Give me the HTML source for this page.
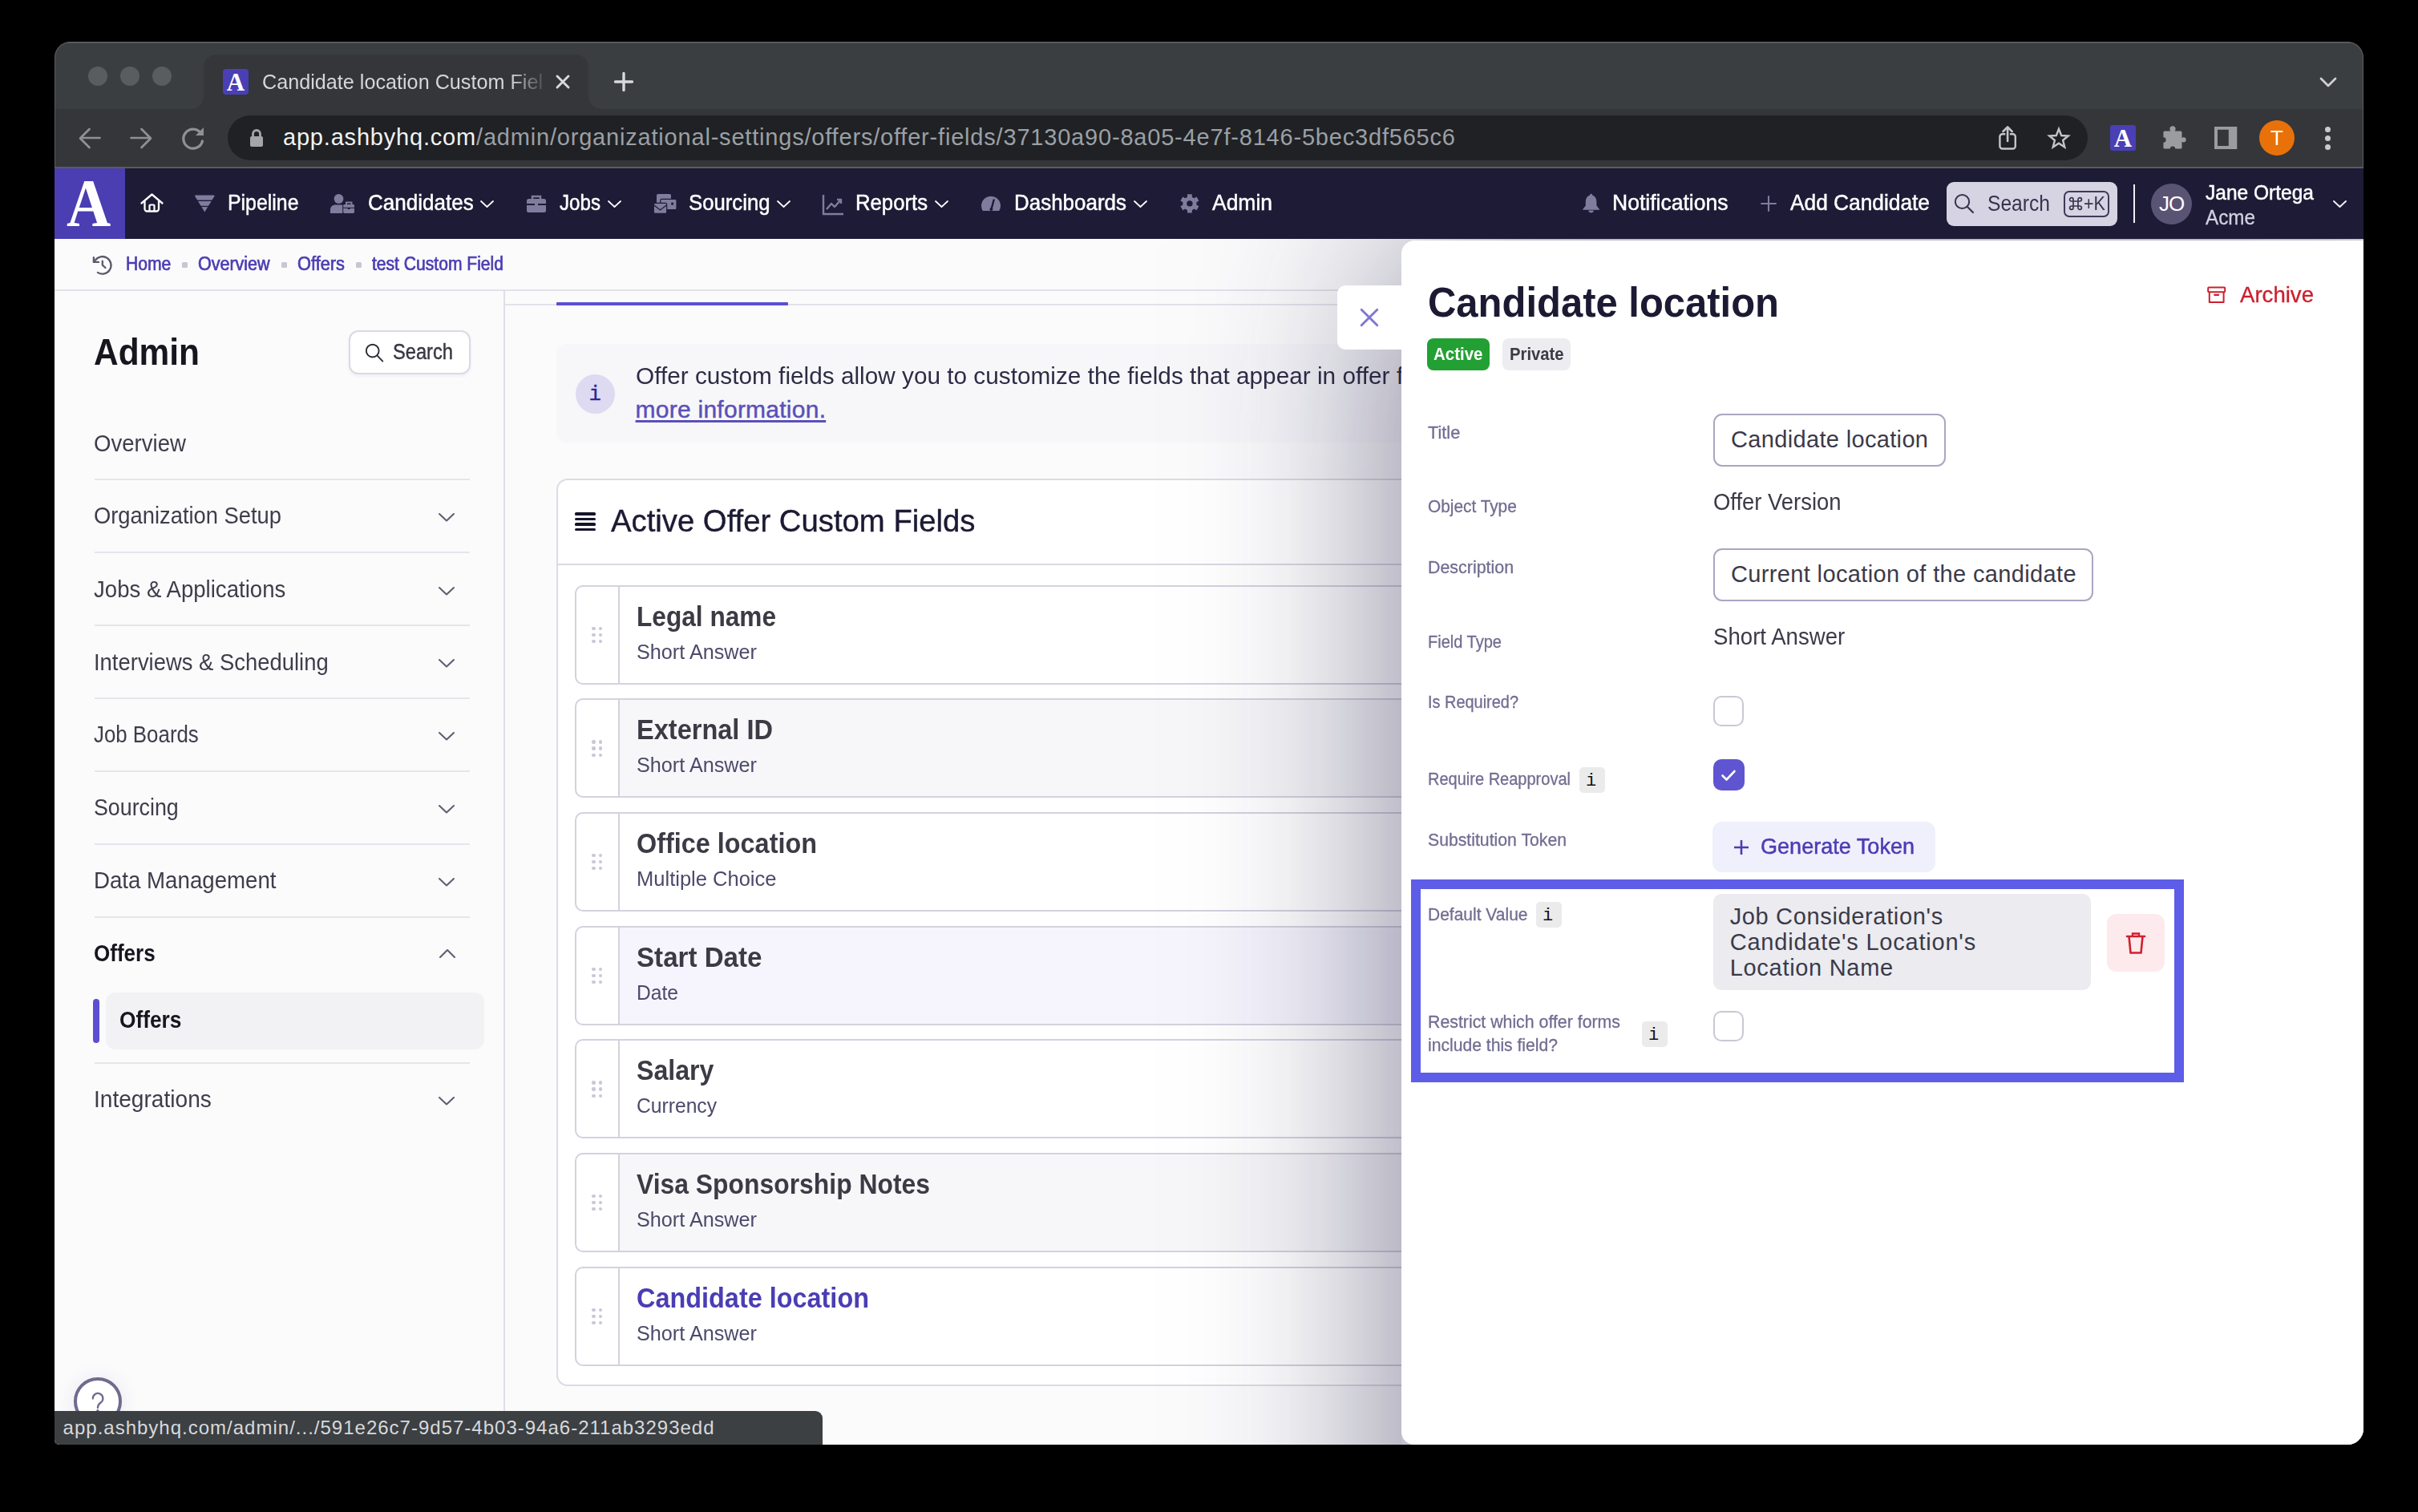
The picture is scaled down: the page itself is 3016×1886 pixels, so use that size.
<!DOCTYPE html><html><head><meta charset="utf-8"><style>
html,body{margin:0;padding:0;background:#000;width:3016px;height:1886px;overflow:hidden;font-family:'Liberation Sans',sans-serif}
</style></head><body><div style="position:absolute;left:68px;top:52px;width:2880px;height:1750px;border-radius:20px 20px 20px 6px;overflow:hidden;background:#3c3f42"><div style="position:absolute;left:-68px;top:-52px;width:3016px;height:1886px">
<div style="position:absolute;left:68px;top:52px;width:2880px;height:84px;background:#3b3e41;"></div>
<div style="position:absolute;left:68px;top:52px;width:2880px;height:2px;background:#55585b;"></div>
<div style="position:absolute;left:110px;top:83px;width:24px;height:24px;border-radius:50%;background:#5a5d60"></div>
<div style="position:absolute;left:150px;top:83px;width:24px;height:24px;border-radius:50%;background:#5a5d60"></div>
<div style="position:absolute;left:190px;top:83px;width:24px;height:24px;border-radius:50%;background:#5a5d60"></div>
<svg style="position:absolute;left:230px;top:60px;" width="530" height="76" viewBox="0 0 530 76"><path d="M 8 76 A 16 16 0 0 0 24 60 L 24 24 A 16 16 0 0 1 40 8 L 488 8 A 16 16 0 0 1 504 24 L 504 60 A 16 16 0 0 0 520 76 Z" fill="#35363a"/></svg>
<div style="position:absolute;left:278px;top:86px;width:32px;height:32px;border-radius:4px;background:#4a3fb5;overflow:hidden"><div style="position:absolute;left:0;top:1px;width:32px;text-align:center;font:700 31px/32px 'Liberation Serif',serif;color:#fff">A</div></div>
<div class="t" style="position:absolute;left:327.0px;top:88.9px;font:400 26px/26px 'Liberation Sans', sans-serif;color:#d5d6d9;white-space:pre;letter-spacing:0.000px;transform:scaleX(0.9687);transform-origin:0 0;-webkit-mask-image:linear-gradient(90deg,#000 0,#000 318px,rgba(0,0,0,0.35) 350px,transparent 374px);">Candidate location Custom Fiel</div>
<svg style="position:absolute;left:692px;top:92px;" width="20" height="20" viewBox="0 0 20 20"><path d="M3 3 L17 17 M17 3 L3 17" stroke="#d8d9db" stroke-width="2.9" stroke-linecap="round"/></svg>
<svg style="position:absolute;left:764px;top:88px;" width="28" height="28" viewBox="0 0 28 28"><path d="M14 3.5 V24.5 M3.5 14 H24.5" stroke="#d8d9db" stroke-width="3.4" stroke-linecap="round"/></svg>
<svg style="position:absolute;left:2892px;top:92px;" width="24" height="20" viewBox="0 0 24 20"><path d="M3 6 L12 15 L21 6" stroke="#cfd0d2" stroke-width="2.8" fill="none" stroke-linecap="round" stroke-linejoin="round"/></svg>
<div style="position:absolute;left:68px;top:136px;width:2880px;height:72px;background:#35363a;"></div>
<div style="position:absolute;left:68px;top:208px;width:2880px;height:2px;background:#5b5c60;"></div>
<svg style="position:absolute;left:96px;top:156px;" width="32" height="32" viewBox="0 0 32 32"><path d="M28.5 16 H4.5 M15.5 5 L4 16.5 L15.5 28" stroke="#8f9195" stroke-width="2.7" fill="none" stroke-linecap="round" stroke-linejoin="round"/></svg>
<svg style="position:absolute;left:160px;top:156px;" width="32" height="32" viewBox="0 0 32 32"><path d="M3.5 16 H27.5 M16.5 5 L28 16.5 L16.5 28" stroke="#8f9195" stroke-width="2.7" fill="none" stroke-linecap="round" stroke-linejoin="round"/></svg>
<svg style="position:absolute;left:224px;top:156px;" width="34" height="34" viewBox="0 0 34 34"><path d="M26.5 10 A 12 12 0 1 0 28.5 20" stroke="#8f9195" stroke-width="3.2" fill="none" stroke-linecap="round"/><path d="M30 3 L30 13 L20 13 Z" fill="#8f9195"/></svg>
<div style="position:absolute;left:284px;top:144px;width:2320px;height:56px;background:#202124;border-radius:28px;"></div>
<svg style="position:absolute;left:310px;top:160px;" width="20" height="25" viewBox="0 0 20 25"><path d="M5.5 10 V7 A4.5 4.5 0 0 1 14.5 7 V10" stroke="#a2a6aa" stroke-width="2.8" fill="none"/><rect x="2" y="10" width="16" height="13" rx="2" fill="#a2a6aa"/></svg>
<div class="t" style="position:absolute;left:353.0px;top:156.7px;font:400 29px/29px 'Liberation Sans', sans-serif;color:#f1f3f4;white-space:pre;letter-spacing:0.806px;">app.ashbyhq.com<span style="color:#9aa0a6">/admin/organizational-settings/offers/offer-fields/37130a90-8a05-4e7f-8146-5bec3df565c6</span></div>
<svg style="position:absolute;left:2488px;top:154px;" width="32" height="36" viewBox="0 0 32 36"><path d="M13.3 13.2 H9.6 A3.2 3.2 0 0 0 6.4 16.4 V28.3 A3.2 3.2 0 0 0 9.6 31.5 H22.6 A3.2 3.2 0 0 0 25.8 28.3 V16.4 A3.2 3.2 0 0 0 22.6 13.2 H18.9" stroke="#c4c5c7" stroke-width="2.4" fill="none"/><path d="M16.1 22 V5 M10.5 10 L16.1 4.4 L21.7 10" stroke="#c4c5c7" stroke-width="2.6" fill="none" stroke-linecap="round" stroke-linejoin="round"/></svg>
<svg style="position:absolute;left:2550px;top:154px;" width="36" height="36" viewBox="0 0 36 36"><path d="M18 4.5 L21.6 13.8 L31.4 14.3 L23.8 20.6 L26.3 30.3 L18 24.9 L9.7 30.3 L12.2 20.6 L4.6 14.3 L14.4 13.8 Z" transform="translate(18,18) scale(0.88) translate(-18,-17.2)" stroke="#c4c5c7" stroke-width="2.7" fill="none" stroke-linejoin="miter"/></svg>
<div style="position:absolute;left:2632px;top:156px;width:32px;height:32px;border-radius:3px;background:#4a3fb5;overflow:hidden"><div style="position:absolute;left:0;top:1px;width:32px;text-align:center;font:700 31px/32px 'Liberation Serif',serif;color:#fff">A</div></div>
<svg style="position:absolute;left:2696px;top:154px;" width="34" height="36" viewBox="0 0 34 36"><rect x="2.4" y="9.5" width="23.1" height="21.9" rx="1.5" fill="#9a9c9f"/><circle cx="14" cy="6.8" r="3.6" fill="#9a9c9f"/><circle cx="27.6" cy="20.3" r="3.1" fill="#9a9c9f"/><circle cx="2.4" cy="20.5" r="3.2" fill="#35363a"/><circle cx="14" cy="31.6" r="3.2" fill="#35363a"/></svg>
<svg style="position:absolute;left:2758px;top:154px;" width="36" height="36" viewBox="0 0 36 36"><path d="M4 4 H32.3 V32 H4 Z M8 7.8 V28 H21.8 V7.8 Z" fill="#9a9c9f" fill-rule="evenodd"/></svg>
<div style="position:absolute;left:2818px;top:150px;width:44px;height:44px;border-radius:50%;background:#e8710a;color:#fff;font:400 26px/44px 'Liberation Sans';text-align:center">T</div>
<div style="position:absolute;left:2900px;top:157.5px;width:7px;height:7px;border-radius:50%;background:#c8cacc"></div>
<div style="position:absolute;left:2900px;top:168.5px;width:7px;height:7px;border-radius:50%;background:#c8cacc"></div>
<div style="position:absolute;left:2900px;top:179.5px;width:7px;height:7px;border-radius:50%;background:#c8cacc"></div>
<div style="position:absolute;left:68px;top:52px;width:2878px;height:160px;border:1px solid #5a5d60;border-bottom:none;border-radius:20px 20px 0 0;"></div>
<div style="position:absolute;left:68px;top:210px;width:2880px;height:88px;background:#1e1b36;"></div>
<div style="position:absolute;left:68px;top:210px;width:88px;height:88px;background:#4b3db2;"></div>
<div class="t" style="position:absolute;left:83.0px;top:211.8px;font:700 84px/84px 'Liberation Serif', serif;color:#ffffff;white-space:pre;letter-spacing:0.000px;transform:scaleX(0.91);transform-origin:0 0;">A</div>
<svg style="position:absolute;left:172px;top:238px;" width="36" height="32" viewBox="0 0 36 32"><path d="M4.5 15.5 L17.5 4.5 L30.5 15.5" stroke="#ffffff" stroke-width="2.3" fill="none" stroke-linejoin="round" stroke-linecap="round"/><path d="M8.5 13 V22.5 A3 3 0 0 0 11.5 25.5 H23 A3 3 0 0 0 26 22.5 V13" stroke="#ffffff" stroke-width="2.3" fill="none"/><path d="M14.5 25.5 V18.5 Q14.5 17.5 15.5 17.5 H19.5 Q20.5 17.5 20.5 18.5 V25.5" stroke="#ffffff" stroke-width="2.2" fill="none"/></svg>
<svg style="position:absolute;left:240px;top:240px;" width="30" height="28" viewBox="0 0 30 28"><path d="M4 3.6 H26.6 Q28 3.6 27.3 5 L15.3 24.5 L3.3 5 Q2.6 3.6 4 3.6 Z" fill="#807c9e"/><rect x="0" y="9.6" width="30" height="1.4" fill="#1e1b36"/><rect x="0" y="16.8" width="30" height="1.3" fill="#1e1b36"/></svg>
<div class="t" style="position:absolute;left:283.5px;top:239.2px;font:400 28px/28px 'Liberation Sans', sans-serif;color:#ffffff;white-space:pre;letter-spacing:0.000px;transform:scaleX(0.8882);transform-origin:0 0;-webkit-text-stroke:0.5px #fff;">Pipeline</div>
<svg style="position:absolute;left:410px;top:240px;" width="34" height="30" viewBox="0 0 34 30"><circle cx="12.5" cy="8" r="5.9" fill="#807c9e"/><path d="M2 26 V21.5 C2 17.8 4.8 15.6 8.5 15.6 H17.2 V26 Z" fill="#807c9e"/><path d="M22 15 V12.5 H28.5 V15" stroke="#807c9e" stroke-width="2" fill="none"/><rect x="18.2" y="15" width="13.8" height="11" rx="1.4" fill="#807c9e"/><rect x="18" y="18.8" width="14.2" height="1" fill="#1e1b36"/><rect x="23.8" y="19" width="2.8" height="2" fill="#1e1b36"/></svg>
<div class="t" style="position:absolute;left:459.0px;top:239.2px;font:400 28px/28px 'Liberation Sans', sans-serif;color:#ffffff;white-space:pre;letter-spacing:0.000px;transform:scaleX(0.9297);transform-origin:0 0;-webkit-text-stroke:0.5px #fff;">Candidates</div>
<svg style="position:absolute;left:598px;top:248.2px;" width="19" height="14.0" viewBox="0 0 19 14.0"><path d="M2 3 L9.5 10.0 L17 3" stroke="#ffffff" stroke-width="1.8" fill="none" stroke-linecap="round" stroke-linejoin="round"/></svg>
<svg style="position:absolute;left:655px;top:240px;" width="28" height="28" viewBox="0 0 28 28"><rect x="2" y="8" width="24" height="17" rx="2.5" fill="#807c9e"/><path d="M9 8 V5 H19 V8" stroke="#807c9e" stroke-width="2.5" fill="none"/><rect x="2" y="14" width="24" height="2" fill="#1e1b36"/><rect x="12" y="12.5" width="4" height="5" fill="#807c9e"/></svg>
<div class="t" style="position:absolute;left:698.0px;top:239.2px;font:400 28px/28px 'Liberation Sans', sans-serif;color:#ffffff;white-space:pre;letter-spacing:0.000px;transform:scaleX(0.8621);transform-origin:0 0;-webkit-text-stroke:0.5px #fff;">Jobs</div>
<svg style="position:absolute;left:757px;top:248.2px;" width="19" height="14.0" viewBox="0 0 19 14.0"><path d="M2 3 L9.5 10.0 L17 3" stroke="#ffffff" stroke-width="1.8" fill="none" stroke-linecap="round" stroke-linejoin="round"/></svg>
<svg style="position:absolute;left:812px;top:240px;" width="34" height="30" viewBox="0 0 34 30"><rect x="7" y="2" width="18" height="12" rx="1.8" fill="#807c9e"/><rect x="11.8" y="8.3" width="20.2" height="13.4" rx="1.8" fill="#807c9e" stroke="#1e1b36" stroke-width="1.2"/><rect x="25.2" y="12.7" width="2.8" height="2.9" fill="#1e1b36"/><rect x="3.3" y="13.3" width="16.4" height="13" rx="1.8" fill="#807c9e" stroke="#1e1b36" stroke-width="1.2"/><path d="M3.8 16 L11.5 22 L19.2 16" stroke="#1e1b36" stroke-width="1.3" fill="none"/></svg>
<div class="t" style="position:absolute;left:859.0px;top:239.2px;font:400 28px/28px 'Liberation Sans', sans-serif;color:#ffffff;white-space:pre;letter-spacing:0.000px;transform:scaleX(0.9184);transform-origin:0 0;-webkit-text-stroke:0.5px #fff;">Sourcing</div>
<svg style="position:absolute;left:968px;top:248.2px;" width="19" height="14.0" viewBox="0 0 19 14.0"><path d="M2 3 L9.5 10.0 L17 3" stroke="#ffffff" stroke-width="1.8" fill="none" stroke-linecap="round" stroke-linejoin="round"/></svg>
<svg style="position:absolute;left:1024px;top:240px;" width="30" height="30" viewBox="0 0 30 30"><path d="M3 3 V27 H28" stroke="#807c9e" stroke-width="2.4" fill="none"/><path d="M7 21 L13 14 L17 18 L25 9 M20 9 H25 V14" stroke="#807c9e" stroke-width="2.4" fill="none" stroke-linejoin="round"/></svg>
<div class="t" style="position:absolute;left:1067.0px;top:239.2px;font:400 28px/28px 'Liberation Sans', sans-serif;color:#ffffff;white-space:pre;letter-spacing:0.000px;transform:scaleX(0.9179);transform-origin:0 0;-webkit-text-stroke:0.5px #fff;">Reports</div>
<svg style="position:absolute;left:1165px;top:248.2px;" width="19" height="14.0" viewBox="0 0 19 14.0"><path d="M2 3 L9.5 10.0 L17 3" stroke="#ffffff" stroke-width="1.8" fill="none" stroke-linecap="round" stroke-linejoin="round"/></svg>
<svg style="position:absolute;left:1222px;top:242px;" width="28" height="24" viewBox="0 0 28 24"><path d="M3.8 21 A12 12 0 1 1 24.2 21 Z" fill="#807c9e"/><path d="M14.6 18.6 L17.6 7.5" stroke="#1e1b36" stroke-width="2.4" stroke-linecap="round"/><circle cx="14.4" cy="19" r="2" fill="#1e1b36"/></svg>
<div class="t" style="position:absolute;left:1265.0px;top:239.2px;font:400 28px/28px 'Liberation Sans', sans-serif;color:#ffffff;white-space:pre;letter-spacing:0.000px;transform:scaleX(0.9272);transform-origin:0 0;-webkit-text-stroke:0.5px #fff;">Dashboards</div>
<svg style="position:absolute;left:1413px;top:248.2px;" width="19" height="14.0" viewBox="0 0 19 14.0"><path d="M2 3 L9.5 10.0 L17 3" stroke="#ffffff" stroke-width="1.8" fill="none" stroke-linecap="round" stroke-linejoin="round"/></svg>
<svg style="position:absolute;left:1470px;top:240px;" width="28" height="28" viewBox="0 0 28 28"><g transform="translate(13.9,13.9)" fill="#807c9e"><circle r="8.6"/><rect x="-2.9" y="-11.6" width="5.8" height="5" transform="rotate(0)"/><rect x="-2.9" y="-11.6" width="5.8" height="5" transform="rotate(60)"/><rect x="-2.9" y="-11.6" width="5.8" height="5" transform="rotate(120)"/><rect x="-2.9" y="-11.6" width="5.8" height="5" transform="rotate(180)"/><rect x="-2.9" y="-11.6" width="5.8" height="5" transform="rotate(240)"/><rect x="-2.9" y="-11.6" width="5.8" height="5" transform="rotate(300)"/></g><circle cx="13.9" cy="13.9" r="3.7" fill="#1e1b36"/></svg>
<div class="t" style="position:absolute;left:1512.0px;top:239.2px;font:400 28px/28px 'Liberation Sans', sans-serif;color:#ffffff;white-space:pre;letter-spacing:0.000px;transform:scaleX(0.9449);transform-origin:0 0;-webkit-text-stroke:0.5px #fff;">Admin</div>
<svg style="position:absolute;left:1970px;top:240px;" width="30" height="30" viewBox="0 0 30 30"><path d="M14.6 3.6 C9.6 3.6 7.8 7.8 7.8 12.2 V16.6 L4.3 21 Q3.9 21.8 4.8 21.8 H24.4 Q25.3 21.8 24.9 21 L21.4 16.6 V12.2 C21.4 7.8 19.6 3.6 14.6 3.6 Z" fill="#807c9e"/><circle cx="14.6" cy="3.4" r="1.7" fill="#807c9e"/><path d="M11.4 22.4 A3.2 2.8 0 0 0 17.8 22.4 Z" fill="#807c9e"/></svg>
<div class="t" style="position:absolute;left:2010.5px;top:239.2px;font:400 28px/28px 'Liberation Sans', sans-serif;color:#ffffff;white-space:pre;letter-spacing:0.000px;transform:scaleX(0.9474);transform-origin:0 0;-webkit-text-stroke:0.5px #fff;">Notifications</div>
<svg style="position:absolute;left:2194px;top:242px;" width="24" height="24" viewBox="0 0 24 24"><path d="M12 2.3 V21.7 M2.3 12 H21.7" stroke="#807c9e" stroke-width="2.1"/></svg>
<div class="t" style="position:absolute;left:2233.0px;top:239.2px;font:400 28px/28px 'Liberation Sans', sans-serif;color:#ffffff;white-space:pre;letter-spacing:0.000px;transform:scaleX(0.9392);transform-origin:0 0;-webkit-text-stroke:0.5px #fff;">Add Candidate</div>
<div style="position:absolute;left:2428px;top:227px;width:213px;height:55px;background:#d6d3e2;border-radius:9px;"></div>
<svg style="position:absolute;left:2436px;top:240px;" width="30" height="30" viewBox="0 0 30 30"><circle cx="11.5" cy="11.5" r="8.6" stroke="#37344f" stroke-width="2" fill="none"/><path d="M18 18 L25 25" stroke="#37344f" stroke-width="2.2" stroke-linecap="round"/></svg>
<div class="t" style="position:absolute;left:2478.7px;top:239.7px;font:400 28px/28px 'Liberation Sans', sans-serif;color:#37344f;white-space:pre;letter-spacing:0.000px;transform:scaleX(0.8792);transform-origin:0 0;">Search</div>
<div style="position:absolute;left:2574px;top:238px;width:53px;height:29px;border:2px solid #3d3a5a;border-radius:7px"></div>
<svg style="position:absolute;left:2580px;top:245px;" width="18" height="18" viewBox="0 0 18 18"><path d="M6 6 V3.8 A2.2 2.2 0 1 0 3.8 6 H14.2 A2.2 2.2 0 1 0 12 3.8 V14.2 A2.2 2.2 0 1 0 14.2 12 H3.8 A2.2 2.2 0 1 0 6 14.2 Z" stroke="#37344f" stroke-width="1.7" fill="none" stroke-linejoin="round"/></svg>
<div class="t" style="position:absolute;left:2598.5px;top:242.9px;font:400 23px/23px 'Liberation Sans', sans-serif;color:#37344f;white-space:pre;letter-spacing:0.000px;transform:scaleX(0.9381);transform-origin:0 0;">+K</div>
<div style="position:absolute;left:2661px;top:230px;width:2px;height:48px;background:#f0eff6;"></div>
<div style="position:absolute;left:2683px;top:228.5px;width:51px;height:51px;border-radius:50%;background:#5a5474;color:#fff;font:400 26px/51px 'Liberation Sans';text-align:center;letter-spacing:-1px">JO</div>
<div class="t" style="position:absolute;left:2750.5px;top:226.9px;font:400 26px/26px 'Liberation Sans', sans-serif;color:#ffffff;white-space:pre;letter-spacing:0.000px;transform:scaleX(0.9434);transform-origin:0 0;-webkit-text-stroke:0.5px #fff;">Jane Ortega</div>
<div class="t" style="position:absolute;left:2750.5px;top:257.9px;font:400 26px/26px 'Liberation Sans', sans-serif;color:#d2d0e0;white-space:pre;letter-spacing:0.000px;transform:scaleX(0.9328);transform-origin:0 0;-webkit-text-stroke:0.3px #d2d0e0;">Acme</div>
<svg style="position:absolute;left:2908.5px;top:248px;" width="19.0" height="14" viewBox="0 0 19.0 14"><path d="M2 3 L9.5 10.0 L17 3" stroke="#f4f3fa" stroke-width="1.9" fill="none" stroke-linecap="round" stroke-linejoin="round"/></svg>
<div style="position:absolute;left:68px;top:298px;width:2880px;height:1504px;overflow:hidden;background:#fbfbfc"><div style="position:absolute;left:-68px;top:-298px;width:3016px;height:1886px">
<div style="position:absolute;left:68px;top:361px;width:2880px;height:2px;background:#e3e2ea;"></div>
<svg style="position:absolute;left:112px;top:316px;" width="32" height="30" viewBox="0 0 32 30"><path d="M9.9 23.9 A10.8 10.8 0 1 0 6.6 9" stroke="#5b5a6c" stroke-width="2.3" fill="none" stroke-linecap="round"/><path d="M4.9 5.2 V10.9 H10.9" stroke="#5b5a6c" stroke-width="2.4" fill="none" stroke-linecap="round" stroke-linejoin="round"/><path d="M15.8 9.6 V14.6 L19.5 18" stroke="#5b5a6c" stroke-width="2.3" fill="none" stroke-linecap="round" stroke-linejoin="round"/></svg>
<div class="t" style="position:absolute;left:156.7px;top:317.8px;font:400 23px/23px 'Liberation Sans', sans-serif;color:#4b3db2;white-space:pre;letter-spacing:0.000px;transform:scaleX(0.9175);transform-origin:0 0;-webkit-text-stroke:0.7px #4b3db2;">Home</div>
<div style="position:absolute;left:227px;top:326.5px;width:7px;height:7.0px;background:#c8c6d6;border-radius:1.5px;"></div>
<div class="t" style="position:absolute;left:247.0px;top:317.8px;font:400 23px/23px 'Liberation Sans', sans-serif;color:#4b3db2;white-space:pre;letter-spacing:0.000px;transform:scaleX(0.9347);transform-origin:0 0;-webkit-text-stroke:0.7px #4b3db2;">Overview</div>
<div style="position:absolute;left:351px;top:326.5px;width:7px;height:7.0px;background:#c8c6d6;border-radius:1.5px;"></div>
<div class="t" style="position:absolute;left:371.0px;top:317.8px;font:400 23px/23px 'Liberation Sans', sans-serif;color:#4b3db2;white-space:pre;letter-spacing:0.000px;transform:scaleX(0.9483);transform-origin:0 0;-webkit-text-stroke:0.7px #4b3db2;">Offers</div>
<div style="position:absolute;left:444px;top:326.5px;width:7px;height:7.0px;background:#c8c6d6;border-radius:1.5px;"></div>
<div class="t" style="position:absolute;left:464.0px;top:317.8px;font:400 23px/23px 'Liberation Sans', sans-serif;color:#4b3db2;white-space:pre;letter-spacing:0.000px;transform:scaleX(0.9164);transform-origin:0 0;-webkit-text-stroke:0.7px #4b3db2;">test Custom Field</div>
<div style="position:absolute;left:628px;top:363px;width:2px;height:1438px;background:#dfdee7;"></div>
<div class="t" style="position:absolute;left:117.0px;top:414.8px;font:700 47px/47px 'Liberation Sans', sans-serif;color:#17161f;white-space:pre;letter-spacing:0.000px;transform:scaleX(0.9028);transform-origin:0 0;">Admin</div>
<div style="position:absolute;left:434.5px;top:412.3px;width:148.7px;height:51px;border:2px solid #d9dae5;border-radius:12px;background:#fff;box-shadow:0 2px 4px rgba(30,30,60,0.06)"></div>
<svg style="position:absolute;left:453px;top:428px;" width="28" height="28" viewBox="0 0 28 28"><circle cx="11.7" cy="9.6" r="7.9" stroke="#2d2c36" stroke-width="1.9" fill="none"/><path d="M17.4 15.4 L24.3 22.6" stroke="#2d2c36" stroke-width="1.9" stroke-linecap="round"/></svg>
<div class="t" style="position:absolute;left:490.0px;top:425.7px;font:400 27px/27px 'Liberation Sans', sans-serif;color:#383743;white-space:pre;letter-spacing:0.000px;transform:scaleX(0.8766);transform-origin:0 0;-webkit-text-stroke:0.45px #383743;">Search</div>
<div class="t" style="position:absolute;left:117.0px;top:539.4px;font:400 29px/29px 'Liberation Sans', sans-serif;color:#3e3d4b;white-space:pre;letter-spacing:0.000px;transform:scaleX(0.9515);transform-origin:0 0;">Overview</div>
<div style="position:absolute;left:118px;top:597px;width:468px;height:2px;background:#e6e5ec;"></div>
<div class="t" style="position:absolute;left:117.0px;top:629.0px;font:400 29px/29px 'Liberation Sans', sans-serif;color:#3e3d4b;white-space:pre;letter-spacing:0.000px;transform:scaleX(0.9425);transform-origin:0 0;">Organization Setup</div>
<div style="position:absolute;left:118px;top:688px;width:468px;height:2px;background:#e6e5ec;"></div>
<svg style="position:absolute;left:546px;top:637.6px;" width="22" height="14.0" viewBox="0 0 22 14.0"><path d="M2 3 L11.0 11.5 L20 3" stroke="#605e70" stroke-width="2.1" fill="none" stroke-linecap="round" stroke-linejoin="round"/></svg>
<div class="t" style="position:absolute;left:117.0px;top:720.9px;font:400 29px/29px 'Liberation Sans', sans-serif;color:#3e3d4b;white-space:pre;letter-spacing:0.000px;transform:scaleX(0.9516);transform-origin:0 0;">Jobs &amp; Applications</div>
<div style="position:absolute;left:118px;top:779px;width:468px;height:2px;background:#e6e5ec;"></div>
<svg style="position:absolute;left:546px;top:729.5px;" width="22" height="14.0" viewBox="0 0 22 14.0"><path d="M2 3 L11.0 11.5 L20 3" stroke="#605e70" stroke-width="2.1" fill="none" stroke-linecap="round" stroke-linejoin="round"/></svg>
<div class="t" style="position:absolute;left:117.0px;top:811.6px;font:400 29px/29px 'Liberation Sans', sans-serif;color:#3e3d4b;white-space:pre;letter-spacing:0.000px;transform:scaleX(0.9457);transform-origin:0 0;">Interviews &amp; Scheduling</div>
<div style="position:absolute;left:118px;top:870px;width:468px;height:2px;background:#e6e5ec;"></div>
<svg style="position:absolute;left:546px;top:820.2px;" width="22" height="14.0" viewBox="0 0 22 14.0"><path d="M2 3 L11.0 11.5 L20 3" stroke="#605e70" stroke-width="2.1" fill="none" stroke-linecap="round" stroke-linejoin="round"/></svg>
<div class="t" style="position:absolute;left:117.0px;top:902.4px;font:400 29px/29px 'Liberation Sans', sans-serif;color:#3e3d4b;white-space:pre;letter-spacing:0.000px;transform:scaleX(0.8916);transform-origin:0 0;">Job Boards</div>
<div style="position:absolute;left:118px;top:961px;width:468px;height:2px;background:#e6e5ec;"></div>
<svg style="position:absolute;left:546px;top:911px;" width="22" height="14" viewBox="0 0 22 14"><path d="M2 3 L11.0 11.5 L20 3" stroke="#605e70" stroke-width="2.1" fill="none" stroke-linecap="round" stroke-linejoin="round"/></svg>
<div class="t" style="position:absolute;left:117.0px;top:992.9px;font:400 29px/29px 'Liberation Sans', sans-serif;color:#3e3d4b;white-space:pre;letter-spacing:0.000px;transform:scaleX(0.9234);transform-origin:0 0;">Sourcing</div>
<div style="position:absolute;left:118px;top:1052px;width:468px;height:2px;background:#e6e5ec;"></div>
<svg style="position:absolute;left:546px;top:1001.5px;" width="22" height="14.0" viewBox="0 0 22 14.0"><path d="M2 3 L11.0 11.5 L20 3" stroke="#605e70" stroke-width="2.1" fill="none" stroke-linecap="round" stroke-linejoin="round"/></svg>
<div class="t" style="position:absolute;left:117.0px;top:1084.3px;font:400 29px/29px 'Liberation Sans', sans-serif;color:#3e3d4b;white-space:pre;letter-spacing:0.000px;transform:scaleX(0.9535);transform-origin:0 0;">Data Management</div>
<div style="position:absolute;left:118px;top:1143px;width:468px;height:2px;background:#e6e5ec;"></div>
<svg style="position:absolute;left:546px;top:1093px;" width="22" height="14" viewBox="0 0 22 14"><path d="M2 3 L11.0 11.5 L20 3" stroke="#605e70" stroke-width="2.1" fill="none" stroke-linecap="round" stroke-linejoin="round"/></svg>
<div class="t" style="position:absolute;left:117.0px;top:1175.3px;font:700 29px/29px 'Liberation Sans', sans-serif;color:#17161f;white-space:pre;letter-spacing:0.000px;transform:scaleX(0.8979);transform-origin:0 0;">Offers</div>
<svg style="position:absolute;left:546px;top:1180px;" width="24" height="18" viewBox="0 0 24 18"><path d="M3 14 L12 5 L21 14" stroke="#605e70" stroke-width="2.1" fill="none" stroke-linecap="round" stroke-linejoin="round"/></svg>
<div style="position:absolute;left:132px;top:1238px;width:472px;height:70.5px;background:#f2f2f5;border-radius:12px;"></div>
<div style="position:absolute;left:116px;top:1246px;width:8px;height:54.5px;background:#5b4fd4;border-radius:4px;"></div>
<div class="t" style="position:absolute;left:148.6px;top:1258.3px;font:700 29px/29px 'Liberation Sans', sans-serif;color:#17161f;white-space:pre;letter-spacing:0.000px;transform:scaleX(0.9061);transform-origin:0 0;">Offers</div>
<div style="position:absolute;left:118px;top:1325px;width:468px;height:2px;background:#e6e5ec;"></div>
<div class="t" style="position:absolute;left:117.0px;top:1357.3px;font:400 29px/29px 'Liberation Sans', sans-serif;color:#3e3d4b;white-space:pre;letter-spacing:0.000px;transform:scaleX(0.9687);transform-origin:0 0;">Integrations</div>
<svg style="position:absolute;left:546px;top:1366px;" width="22" height="14" viewBox="0 0 22 14"><path d="M2 3 L11.0 11.5 L20 3" stroke="#605e70" stroke-width="2.1" fill="none" stroke-linecap="round" stroke-linejoin="round"/></svg>
<div style="position:absolute;left:630px;top:379px;width:2318px;height:2px;background:#e3e2ea;"></div>
<div style="position:absolute;left:694px;top:376.5px;width:289px;height:4.5px;background:#5b4fd4;border-radius:1px;"></div>
<div style="position:absolute;left:694px;top:428.6px;width:2190px;height:123.69999999999993px;background:#f7f7fa;border-radius:12px;"></div>
<div style="position:absolute;left:718px;top:467px;width:49px;height:49px;border-radius:50%;background:#dddaf1"></div>
<div class="t" style="position:absolute;left:734.8px;top:480.2px;font:400 25px/25px 'Liberation Mono', monospace;color:#2a2596;white-space:pre;letter-spacing:0.000px;-webkit-text-stroke:0.4px #2a2596;">i</div>
<div class="t" style="position:absolute;left:792.6px;top:454.4px;font:400 30px/30px 'Liberation Sans', sans-serif;color:#2e2c45;white-space:pre;letter-spacing:0.000px;transform:scaleX(0.9923);transform-origin:0 0;">Offer custom fields allow you to customize the fields that appear in offer</div>
<div class="t" style="position:absolute;left:1742.0px;top:454.4px;font:400 30px/30px 'Liberation Sans', sans-serif;color:#2e2c45;white-space:pre;letter-spacing:0.000px;">forms. See our documentation</div>
<div class="t" style="position:absolute;left:792.6px;top:495.7px;font:400 30px/30px 'Liberation Sans', sans-serif;color:#5a50b8;white-space:pre;letter-spacing:0.248px;text-decoration:underline;text-decoration-thickness:2.5px;text-underline-offset:3px;-webkit-text-stroke:0.45px #5a50b8;">more information.</div>
<div style="position:absolute;left:694px;top:597px;width:2300px;height:1128px;border:2px solid #dcdbe5;border-radius:14px;background:#fff"></div>
<div style="position:absolute;left:717px;top:639.35px;width:26px;height:3.2999999999999545px;background:#16142b;border-radius:1.6px;"></div>
<div style="position:absolute;left:717px;top:645.95px;width:26px;height:3.2999999999999545px;background:#16142b;border-radius:1.6px;"></div>
<div style="position:absolute;left:717px;top:652.35px;width:26px;height:3.2999999999999545px;background:#16142b;border-radius:1.6px;"></div>
<div style="position:absolute;left:717px;top:659.0500000000001px;width:26px;height:3.2999999999999545px;background:#16142b;border-radius:1.6px;"></div>
<div class="t" style="position:absolute;left:761.5px;top:630.1px;font:400 39px/39px 'Liberation Sans', sans-serif;color:#1c1a33;white-space:pre;letter-spacing:0.000px;transform:scaleX(0.9814);transform-origin:0 0;-webkit-text-stroke:0.4px #1c1a33;">Active Offer Custom Fields</div>
<div style="position:absolute;left:696px;top:703px;width:2252px;height:2px;background:#d9d8e2;"></div>
<div style="position:absolute;left:716.7px;top:729.60px;width:2300px;height:120px;border:2px solid #d3d2de;border-radius:10px;background:#fff;overflow:hidden"><div style="position:absolute;left:52.5px;top:0;width:2300px;height:120px;border-left:2px solid #d3d2de;background:#fff"></div></div>
<div style="position:absolute;left:738.2px;top:781.5px;width:4.4px;height:4.4px;border-radius:50%;background:#c9c7d8"></div>
<div style="position:absolute;left:738.2px;top:789.5px;width:4.4px;height:4.4px;border-radius:50%;background:#c9c7d8"></div>
<div style="position:absolute;left:738.2px;top:797.8px;width:4.4px;height:4.4px;border-radius:50%;background:#c9c7d8"></div>
<div style="position:absolute;left:746.5px;top:781.5px;width:4.4px;height:4.4px;border-radius:50%;background:#c9c7d8"></div>
<div style="position:absolute;left:746.5px;top:789.5px;width:4.4px;height:4.4px;border-radius:50%;background:#c9c7d8"></div>
<div style="position:absolute;left:746.5px;top:797.8px;width:4.4px;height:4.4px;border-radius:50%;background:#c9c7d8"></div>
<div class="t" style="position:absolute;left:794.4px;top:750.6px;font:700 35px/35px 'Liberation Sans', sans-serif;color:#3c3b45;white-space:pre;letter-spacing:0.000px;transform:scaleX(0.9035);transform-origin:0 0;">Legal name</div>
<div class="t" style="position:absolute;left:794.4px;top:799.6px;font:400 26px/26px 'Liberation Sans', sans-serif;color:#4c4a6b;white-space:pre;letter-spacing:0.000px;transform:scaleX(0.9700);transform-origin:0 0;">Short Answer</div>
<div style="position:absolute;left:716.7px;top:871.27px;width:2300px;height:120px;border:2px solid #d3d2de;border-radius:10px;background:#fff;overflow:hidden"><div style="position:absolute;left:52.5px;top:0;width:2300px;height:120px;border-left:2px solid #d3d2de;background:#f7f7f9"></div></div>
<div style="position:absolute;left:738.2px;top:923.2px;width:4.4px;height:4.4px;border-radius:50%;background:#c9c7d8"></div>
<div style="position:absolute;left:738.2px;top:931.2px;width:4.4px;height:4.4px;border-radius:50%;background:#c9c7d8"></div>
<div style="position:absolute;left:738.2px;top:939.5px;width:4.4px;height:4.4px;border-radius:50%;background:#c9c7d8"></div>
<div style="position:absolute;left:746.5px;top:923.2px;width:4.4px;height:4.4px;border-radius:50%;background:#c9c7d8"></div>
<div style="position:absolute;left:746.5px;top:931.2px;width:4.4px;height:4.4px;border-radius:50%;background:#c9c7d8"></div>
<div style="position:absolute;left:746.5px;top:939.5px;width:4.4px;height:4.4px;border-radius:50%;background:#c9c7d8"></div>
<div class="t" style="position:absolute;left:794.4px;top:892.3px;font:700 35px/35px 'Liberation Sans', sans-serif;color:#3c3b45;white-space:pre;letter-spacing:0.000px;transform:scaleX(0.9297);transform-origin:0 0;">External ID</div>
<div class="t" style="position:absolute;left:794.4px;top:941.3px;font:400 26px/26px 'Liberation Sans', sans-serif;color:#4c4a6b;white-space:pre;letter-spacing:0.000px;transform:scaleX(0.9700);transform-origin:0 0;">Short Answer</div>
<div style="position:absolute;left:716.7px;top:1012.94px;width:2300px;height:120px;border:2px solid #d3d2de;border-radius:10px;background:#fff;overflow:hidden"><div style="position:absolute;left:52.5px;top:0;width:2300px;height:120px;border-left:2px solid #d3d2de;background:#fff"></div></div>
<div style="position:absolute;left:738.2px;top:1064.8px;width:4.4px;height:4.4px;border-radius:50%;background:#c9c7d8"></div>
<div style="position:absolute;left:738.2px;top:1072.8px;width:4.4px;height:4.4px;border-radius:50%;background:#c9c7d8"></div>
<div style="position:absolute;left:738.2px;top:1081.1px;width:4.4px;height:4.4px;border-radius:50%;background:#c9c7d8"></div>
<div style="position:absolute;left:746.5px;top:1064.8px;width:4.4px;height:4.4px;border-radius:50%;background:#c9c7d8"></div>
<div style="position:absolute;left:746.5px;top:1072.8px;width:4.4px;height:4.4px;border-radius:50%;background:#c9c7d8"></div>
<div style="position:absolute;left:746.5px;top:1081.1px;width:4.4px;height:4.4px;border-radius:50%;background:#c9c7d8"></div>
<div class="t" style="position:absolute;left:794.4px;top:1034.0px;font:700 35px/35px 'Liberation Sans', sans-serif;color:#3c3b45;white-space:pre;letter-spacing:0.000px;transform:scaleX(0.9256);transform-origin:0 0;">Office location</div>
<div class="t" style="position:absolute;left:794.4px;top:1082.9px;font:400 26px/26px 'Liberation Sans', sans-serif;color:#4c4a6b;white-space:pre;letter-spacing:0.000px;transform:scaleX(0.9817);transform-origin:0 0;">Multiple Choice</div>
<div style="position:absolute;left:716.7px;top:1154.61px;width:2300px;height:120px;border:2px solid #d3d2de;border-radius:10px;background:#fff;overflow:hidden"><div style="position:absolute;left:52.5px;top:0;width:2300px;height:120px;border-left:2px solid #d3d2de;background:#f6f5fd"></div></div>
<div style="position:absolute;left:738.2px;top:1206.5px;width:4.4px;height:4.4px;border-radius:50%;background:#c9c7d8"></div>
<div style="position:absolute;left:738.2px;top:1214.5px;width:4.4px;height:4.4px;border-radius:50%;background:#c9c7d8"></div>
<div style="position:absolute;left:738.2px;top:1222.8px;width:4.4px;height:4.4px;border-radius:50%;background:#c9c7d8"></div>
<div style="position:absolute;left:746.5px;top:1206.5px;width:4.4px;height:4.4px;border-radius:50%;background:#c9c7d8"></div>
<div style="position:absolute;left:746.5px;top:1214.5px;width:4.4px;height:4.4px;border-radius:50%;background:#c9c7d8"></div>
<div style="position:absolute;left:746.5px;top:1222.8px;width:4.4px;height:4.4px;border-radius:50%;background:#c9c7d8"></div>
<div class="t" style="position:absolute;left:794.4px;top:1175.7px;font:700 35px/35px 'Liberation Sans', sans-serif;color:#3c3b45;white-space:pre;letter-spacing:0.000px;transform:scaleX(0.9466);transform-origin:0 0;">Start Date</div>
<div class="t" style="position:absolute;left:794.4px;top:1224.6px;font:400 26px/26px 'Liberation Sans', sans-serif;color:#4c4a6b;white-space:pre;letter-spacing:0.000px;transform:scaleX(0.9468);transform-origin:0 0;">Date</div>
<div style="position:absolute;left:716.7px;top:1296.28px;width:2300px;height:120px;border:2px solid #d3d2de;border-radius:10px;background:#fff;overflow:hidden"><div style="position:absolute;left:52.5px;top:0;width:2300px;height:120px;border-left:2px solid #d3d2de;background:#fff"></div></div>
<div style="position:absolute;left:738.2px;top:1348.2px;width:4.4px;height:4.4px;border-radius:50%;background:#c9c7d8"></div>
<div style="position:absolute;left:738.2px;top:1356.2px;width:4.4px;height:4.4px;border-radius:50%;background:#c9c7d8"></div>
<div style="position:absolute;left:738.2px;top:1364.5px;width:4.4px;height:4.4px;border-radius:50%;background:#c9c7d8"></div>
<div style="position:absolute;left:746.5px;top:1348.2px;width:4.4px;height:4.4px;border-radius:50%;background:#c9c7d8"></div>
<div style="position:absolute;left:746.5px;top:1356.2px;width:4.4px;height:4.4px;border-radius:50%;background:#c9c7d8"></div>
<div style="position:absolute;left:746.5px;top:1364.5px;width:4.4px;height:4.4px;border-radius:50%;background:#c9c7d8"></div>
<div class="t" style="position:absolute;left:794.4px;top:1317.3px;font:700 35px/35px 'Liberation Sans', sans-serif;color:#3c3b45;white-space:pre;letter-spacing:0.000px;transform:scaleX(0.9182);transform-origin:0 0;">Salary</div>
<div class="t" style="position:absolute;left:794.4px;top:1366.3px;font:400 26px/26px 'Liberation Sans', sans-serif;color:#4c4a6b;white-space:pre;letter-spacing:0.000px;transform:scaleX(0.9480);transform-origin:0 0;">Currency</div>
<div style="position:absolute;left:716.7px;top:1437.95px;width:2300px;height:120px;border:2px solid #d3d2de;border-radius:10px;background:#fff;overflow:hidden"><div style="position:absolute;left:52.5px;top:0;width:2300px;height:120px;border-left:2px solid #d3d2de;background:#f7f7f9"></div></div>
<div style="position:absolute;left:738.2px;top:1489.8px;width:4.4px;height:4.4px;border-radius:50%;background:#c9c7d8"></div>
<div style="position:absolute;left:738.2px;top:1497.8px;width:4.4px;height:4.4px;border-radius:50%;background:#c9c7d8"></div>
<div style="position:absolute;left:738.2px;top:1506.1px;width:4.4px;height:4.4px;border-radius:50%;background:#c9c7d8"></div>
<div style="position:absolute;left:746.5px;top:1489.8px;width:4.4px;height:4.4px;border-radius:50%;background:#c9c7d8"></div>
<div style="position:absolute;left:746.5px;top:1497.8px;width:4.4px;height:4.4px;border-radius:50%;background:#c9c7d8"></div>
<div style="position:absolute;left:746.5px;top:1506.1px;width:4.4px;height:4.4px;border-radius:50%;background:#c9c7d8"></div>
<div class="t" style="position:absolute;left:794.4px;top:1459.0px;font:700 35px/35px 'Liberation Sans', sans-serif;color:#3c3b45;white-space:pre;letter-spacing:0.000px;transform:scaleX(0.9106);transform-origin:0 0;">Visa Sponsorship Notes</div>
<div class="t" style="position:absolute;left:794.4px;top:1507.9px;font:400 26px/26px 'Liberation Sans', sans-serif;color:#4c4a6b;white-space:pre;letter-spacing:0.000px;transform:scaleX(0.9700);transform-origin:0 0;">Short Answer</div>
<div style="position:absolute;left:716.7px;top:1579.62px;width:2300px;height:120px;border:2px solid #d3d2de;border-radius:10px;background:#fff;overflow:hidden"><div style="position:absolute;left:52.5px;top:0;width:2300px;height:120px;border-left:2px solid #d3d2de;background:#fff"></div></div>
<div style="position:absolute;left:738.2px;top:1631.5px;width:4.4px;height:4.4px;border-radius:50%;background:#c9c7d8"></div>
<div style="position:absolute;left:738.2px;top:1639.5px;width:4.4px;height:4.4px;border-radius:50%;background:#c9c7d8"></div>
<div style="position:absolute;left:738.2px;top:1647.8px;width:4.4px;height:4.4px;border-radius:50%;background:#c9c7d8"></div>
<div style="position:absolute;left:746.5px;top:1631.5px;width:4.4px;height:4.4px;border-radius:50%;background:#c9c7d8"></div>
<div style="position:absolute;left:746.5px;top:1639.5px;width:4.4px;height:4.4px;border-radius:50%;background:#c9c7d8"></div>
<div style="position:absolute;left:746.5px;top:1647.8px;width:4.4px;height:4.4px;border-radius:50%;background:#c9c7d8"></div>
<div class="t" style="position:absolute;left:794.4px;top:1600.7px;font:700 35px/35px 'Liberation Sans', sans-serif;color:#4a3db4;white-space:pre;letter-spacing:0.000px;transform:scaleX(0.9262);transform-origin:0 0;">Candidate location</div>
<div class="t" style="position:absolute;left:794.4px;top:1649.6px;font:400 26px/26px 'Liberation Sans', sans-serif;color:#4c4a6b;white-space:pre;letter-spacing:0.000px;transform:scaleX(0.9700);transform-origin:0 0;">Short Answer</div>
<div style="position:absolute;left:92px;top:1718px;width:51.5px;height:51.5px;border:4px solid #6f6b8e;border-radius:50%;background:#fff;box-shadow:0 2px 24px rgba(60,50,120,0.10)"></div>
<svg style="position:absolute;left:108px;top:1733.5px;" width="28" height="32.0" viewBox="0 0 28 32.0"><path d="M7.8 10.5 A6.3 6.3 0 1 1 17.6 15.5 Q14 18 13.9 22" stroke="#6f6b8e" stroke-width="2.3" fill="none" stroke-linecap="round"/><circle cx="13.9" cy="25.6" r="1.6" fill="#6f6b8e"/></svg>
<div style="position:absolute;left:1748px;top:300px;width:1300px;height:2600px;border-radius:16px 0 0 0;box-shadow:0 0 320px rgba(30,26,66,0.56);background:#c6c3cf"></div>
<div style="position:absolute;left:1748px;top:300px;width:1300px;height:1502px;border-radius:16px 0 0 16px;background:#fff"></div>
<div style="position:absolute;left:1668px;top:356px;width:90px;height:80px;border-radius:10px;background:#fff"></div>
<svg style="position:absolute;left:1694px;top:382px;" width="28" height="28" viewBox="0 0 28 28"><path d="M4.2 4.2 L23.8 23.8 M23.8 4.2 L4.2 23.8" stroke="#7f76d2" stroke-width="2.9" stroke-linecap="round"/></svg>
<div class="t" style="position:absolute;left:1780.8px;top:351.0px;font:700 52px/52px 'Liberation Sans', sans-serif;color:#1c1a33;white-space:pre;letter-spacing:0.000px;transform:scaleX(0.9416);transform-origin:0 0;">Candidate location</div>
<svg style="position:absolute;left:2751px;top:355px;" width="27" height="26" viewBox="0 0 27 26"><rect x="3.2" y="3.6" width="21" height="5.6" rx="1" stroke="#cc1f2d" stroke-width="2" fill="none"/><path d="M4.8 9.2 V22 H22.6 V9.2" stroke="#cc1f2d" stroke-width="2" fill="none" stroke-linejoin="round"/><path d="M11.2 12.8 H16.2" stroke="#cc1f2d" stroke-width="2.2" stroke-linecap="round"/></svg>
<div class="t" style="position:absolute;left:2793.7px;top:354.2px;font:400 28px/28px 'Liberation Sans', sans-serif;color:#cc1f2d;white-space:pre;letter-spacing:0.000px;transform:scaleX(0.9853);transform-origin:0 0;-webkit-text-stroke:0.35px #cc1f2d;">Archive</div>
<div style="position:absolute;left:1780px;top:422px;width:78px;height:40px;background:#23a033;border-radius:8px;"></div>
<div class="t" style="position:absolute;left:1788.4px;top:430.5px;font:700 22px/22px 'Liberation Sans', sans-serif;color:#ffffff;white-space:pre;letter-spacing:0.000px;transform:scaleX(0.9296);transform-origin:0 0;">Active</div>
<div style="position:absolute;left:1874px;top:422px;width:85px;height:40px;background:#ececf1;border-radius:8px;"></div>
<div class="t" style="position:absolute;left:1882.7px;top:430.5px;font:700 22px/22px 'Liberation Sans', sans-serif;color:#3b3a45;white-space:pre;letter-spacing:0.000px;transform:scaleX(0.9211);transform-origin:0 0;">Private</div>
<div class="t" style="position:absolute;left:1780.7px;top:529.4px;font:400 22px/22px 'Liberation Sans', sans-serif;color:#716d92;white-space:pre;letter-spacing:0.000px;transform:scaleX(0.9890);transform-origin:0 0;-webkit-text-stroke:0.3px #716d92;">Title</div>
<div class="t" style="position:absolute;left:1780.7px;top:621.1px;font:400 22px/22px 'Liberation Sans', sans-serif;color:#716d92;white-space:pre;letter-spacing:0.000px;transform:scaleX(0.9470);transform-origin:0 0;-webkit-text-stroke:0.3px #716d92;">Object Type</div>
<div class="t" style="position:absolute;left:1780.7px;top:697.4px;font:400 22px/22px 'Liberation Sans', sans-serif;color:#716d92;white-space:pre;letter-spacing:0.000px;transform:scaleX(0.9732);transform-origin:0 0;-webkit-text-stroke:0.3px #716d92;">Description</div>
<div class="t" style="position:absolute;left:1780.7px;top:789.7px;font:400 22px/22px 'Liberation Sans', sans-serif;color:#716d92;white-space:pre;letter-spacing:0.000px;transform:scaleX(0.9099);transform-origin:0 0;-webkit-text-stroke:0.3px #716d92;">Field Type</div>
<div class="t" style="position:absolute;left:1780.7px;top:865.3px;font:400 22px/22px 'Liberation Sans', sans-serif;color:#716d92;white-space:pre;letter-spacing:0.000px;transform:scaleX(0.9058);transform-origin:0 0;-webkit-text-stroke:0.3px #716d92;">Is Required?</div>
<div class="t" style="position:absolute;left:1780.7px;top:960.9px;font:400 22px/22px 'Liberation Sans', sans-serif;color:#716d92;white-space:pre;letter-spacing:0.000px;transform:scaleX(0.9097);transform-origin:0 0;-webkit-text-stroke:0.3px #716d92;">Require Reapproval</div>
<div class="t" style="position:absolute;left:1780.7px;top:1037.1px;font:400 22px/22px 'Liberation Sans', sans-serif;color:#716d92;white-space:pre;letter-spacing:0.000px;transform:scaleX(0.9644);transform-origin:0 0;-webkit-text-stroke:0.3px #716d92;">Substitution Token</div>
<div class="t" style="position:absolute;left:1780.7px;top:1130.1px;font:400 22px/22px 'Liberation Sans', sans-serif;color:#716d92;white-space:pre;letter-spacing:0.000px;transform:scaleX(0.9544);transform-origin:0 0;-webkit-text-stroke:0.3px #716d92;">Default Value</div>
<div class="t" style="position:absolute;left:1780.7px;top:1264.3px;font:400 22px/22px 'Liberation Sans', sans-serif;color:#716d92;white-space:pre;letter-spacing:0.000px;transform:scaleX(0.9686);transform-origin:0 0;-webkit-text-stroke:0.3px #716d92;">Restrict which offer forms</div>
<div class="t" style="position:absolute;left:1780.7px;top:1293.3px;font:400 22px/22px 'Liberation Sans', sans-serif;color:#716d92;white-space:pre;letter-spacing:0.000px;transform:scaleX(0.9598);transform-origin:0 0;-webkit-text-stroke:0.3px #716d92;">include this field?</div>
<div style="position:absolute;left:1970px;top:957px;width:31.5px;height:31.5px;background:#ebebeb;border-radius:5px;"></div>
<div class="t" style="position:absolute;left:1978.0px;top:963.7px;font:400 22px/22px 'Liberation Mono', monospace;color:#111111;white-space:pre;letter-spacing:0.000px;">i</div>
<div style="position:absolute;left:1916px;top:1125px;width:31.5px;height:31.5px;background:#ebebeb;border-radius:5px;"></div>
<div class="t" style="position:absolute;left:1924.0px;top:1131.7px;font:400 22px/22px 'Liberation Mono', monospace;color:#111111;white-space:pre;letter-spacing:0.000px;">i</div>
<div style="position:absolute;left:2048px;top:1274px;width:31.5px;height:31.5px;background:#ebebeb;border-radius:5px;"></div>
<div class="t" style="position:absolute;left:2056.0px;top:1280.7px;font:400 22px/22px 'Liberation Mono', monospace;color:#111111;white-space:pre;letter-spacing:0.000px;">i</div>
<div style="position:absolute;left:2136.5px;top:515.7px;width:286px;height:62.3px;border:2px solid #a9a6c3;border-radius:11px;background:#fff"></div>
<div class="t" style="position:absolute;left:2159.0px;top:533.9px;font:400 29px/29px 'Liberation Sans', sans-serif;color:#3b3a48;white-space:pre;letter-spacing:0.339px;">Candidate location</div>
<div class="t" style="position:absolute;left:2136.5px;top:612.4px;font:400 29px/29px 'Liberation Sans', sans-serif;color:#3b3a48;white-space:pre;letter-spacing:0.000px;transform:scaleX(0.9454);transform-origin:0 0;">Offer Version</div>
<div style="position:absolute;left:2136.5px;top:683.9px;width:470.5px;height:62.5px;border:2px solid #a9a6c3;border-radius:11px;background:#fff"></div>
<div class="t" style="position:absolute;left:2159.0px;top:702.4px;font:400 29px/29px 'Liberation Sans', sans-serif;color:#3b3a48;white-space:pre;letter-spacing:0.358px;">Current location of the candidate</div>
<div class="t" style="position:absolute;left:2136.7px;top:780.1px;font:400 29px/29px 'Liberation Sans', sans-serif;color:#3b3a48;white-space:pre;letter-spacing:0.000px;transform:scaleX(0.9526);transform-origin:0 0;">Short Answer</div>
<div style="position:absolute;left:2136.7px;top:868px;width:34.3px;height:34.3px;border:2px solid #c9c8d4;border-radius:10px;background:#fff"></div>
<div style="position:absolute;left:2136.5px;top:947px;width:39.09999999999991px;height:39px;background:#6055d0;border-radius:10px;"></div>
<svg style="position:absolute;left:2144px;top:955px;" width="24" height="24" viewBox="0 0 24 24"><path d="M4.5 12.5 L9.5 17.5 L19.5 7" stroke="#fff" stroke-width="2.6" fill="none" stroke-linecap="round" stroke-linejoin="round"/></svg>
<div style="position:absolute;left:2136px;top:1025px;width:277.5px;height:63px;background:#f0effc;border-radius:12px;"></div>
<svg style="position:absolute;left:2160px;top:1045px;" width="24" height="24" viewBox="0 0 24 24"><path d="M12 3 V21 M3 12 H21" stroke="#4a3db4" stroke-width="2.6"/></svg>
<div class="t" style="position:absolute;left:2195.5px;top:1041.9px;font:400 28px/28px 'Liberation Sans', sans-serif;color:#4a3db4;white-space:pre;letter-spacing:0.000px;transform:scaleX(0.9661);transform-origin:0 0;-webkit-text-stroke:0.5px #4a3db4;">Generate Token</div>
<div style="position:absolute;left:1760px;top:1097px;width:940px;height:229px;border:12px solid #5d5de8"></div>
<div style="position:absolute;left:2136.6px;top:1115px;width:471.2000000000003px;height:120px;background:#ebebf0;border-radius:10px;"></div>
<div class="t" style="position:absolute;left:2157.7px;top:1129.1px;font:400 29px/29px 'Liberation Sans', sans-serif;color:#3b3a48;white-space:pre;letter-spacing:0.650px;">Job Consideration&#x27;s</div>
<div class="t" style="position:absolute;left:2157.7px;top:1160.8px;font:400 29px/29px 'Liberation Sans', sans-serif;color:#3b3a48;white-space:pre;letter-spacing:0.786px;">Candidate&#x27;s Location&#x27;s</div>
<div class="t" style="position:absolute;left:2157.7px;top:1193.3px;font:400 29px/29px 'Liberation Sans', sans-serif;color:#3b3a48;white-space:pre;letter-spacing:0.703px;">Location Name</div>
<div style="position:absolute;left:2628px;top:1140px;width:72px;height:71.59999999999991px;background:#fdeaec;border-radius:12px;"></div>
<svg style="position:absolute;left:2650px;top:1160px;" width="28" height="32" viewBox="0 0 28 32"><path d="M3 8 H25" stroke="#d0212f" stroke-width="2.6" stroke-linecap="round"/><path d="M10 8 V4.5 H18 V8" stroke="#d0212f" stroke-width="2.4" fill="none"/><path d="M5.5 8 L7.5 28.5 H20.5 L22.5 8" stroke="#d0212f" stroke-width="2.6" fill="none" stroke-linejoin="round"/></svg>
<div style="position:absolute;left:2136.6px;top:1260.6px;width:34.8px;height:34.8px;border:2px solid #c9c8d4;border-radius:10px;background:#fff"></div>
</div></div>
<div style="position:absolute;left:68px;top:1760px;width:958px;height:42px;background:#3c4043;border-top-right-radius:9px;"></div>
<div class="t" style="position:absolute;left:78.6px;top:1769.4px;font:400 24px/24px 'Liberation Sans', sans-serif;color:#d8d9db;white-space:pre;letter-spacing:1.003px;">app.ashbyhq.com/admin/.../591e26c7-9d57-4b03-94a6-211ab3293edd</div>
</div></div></body></html>
